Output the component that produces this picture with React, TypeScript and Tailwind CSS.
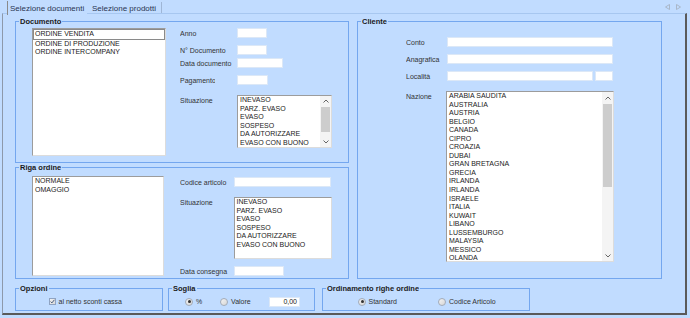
import type { ReactNode } from "react";

const documenti = ["ORDINE VENDITA", "ORDINE DI PRODUZIONE", "ORDINE INTERCOMPANY"];
const situazioni = ["INEVASO", "PARZ. EVASO", "EVASO", "SOSPESO", "DA AUTORIZZARE", "EVASO CON BUONO"];
const nazioni = [
  "ARABIA SAUDITA", "AUSTRALIA", "AUSTRIA", "BELGIO", "CANADA", "CIPRO", "CROAZIA", "DUBAI",
  "GRAN BRETAGNA", "GRECIA", "IRLANDA", "IRLANDA", "ISRAELE", "ITALIA", "KUWAIT", "LIBANO",
  "LUSSEMBURGO", "MALAYSIA", "MESSICO", "OLANDA",
];

function Group({ legend, className, children }: { legend: string; className?: string; children: ReactNode }) {
  return (
    <fieldset className={`border border-[#74a7ef] shrink-0 ${className ?? ""}`}>
      <legend className="ml-[3px] px-[1px] text-[7.5px] leading-[9px] font-bold text-[#1a1a1a]">{legend}</legend>
      {children}
    </fieldset>
  );
}

function Input({ className, value }: { className?: string; value?: string }) {
  return (
    <div className={`h-[10px] bg-white border border-[#dce8f7] text-[7px] leading-[8px] text-right pr-[2px] text-[#222] shrink-0 ${className ?? ""}`}>
      {value}
    </div>
  );
}

function Chevron({ up }: { up?: boolean }) {
  return (
    <svg width="6" height="4" viewBox="0 0 6 4">
      <polyline
        points={up ? "0.5,3.5 3,1 5.5,3.5" : "0.5,0.5 3,3 5.5,0.5"}
        fill="none"
        stroke="#555"
        strokeWidth="0.9"
      />
    </svg>
  );
}

function ListBox({
  items,
  className,
  scroll,
  focusFirst,
}: {
  items: string[];
  className?: string;
  scroll?: { thumbTop: number; thumbHeight: number; arrow: number };
  focusFirst?: boolean;
}) {
  return (
    <div className={`flex bg-white border border-t-[#9c9c9c] border-l-[#9c9c9c] border-r-[#dcdcdc] border-b-[#dcdcdc] overflow-hidden shrink-0 ${className ?? ""}`}>
      <div className="flex-1 min-w-0 flex flex-col">
        {items.map((it, i) => (
          <div
            key={i}
            className={`text-[7px] leading-[8.55px] whitespace-nowrap text-[#222] ${
              focusFirst && i === 0 ? "border border-[#8a8a8a] pl-[1px]" : "pl-[2px]"
            }`}
          >
            {it}
          </div>
        ))}
      </div>
      {scroll && (
        <div className="w-[11px] flex flex-col bg-[#f4f4f4]">
          <div className="flex items-center justify-center" style={{ height: scroll.arrow }}>
            <Chevron up />
          </div>
          <div className="flex-1">
            <div className="bg-[#cdcdcd] mx-[1px]" style={{ marginTop: scroll.thumbTop, height: scroll.thumbHeight }} />
          </div>
          <div className="flex items-center justify-center" style={{ height: scroll.arrow }}>
            <Chevron />
          </div>
        </div>
      )}
    </div>
  );
}

function Label({ children, className }: { children: ReactNode; className?: string }) {
  return (
    <div className={`text-[7px] leading-[9px] text-[#333] whitespace-nowrap overflow-hidden shrink-0 ${className ?? ""}`}>
      {children}
    </div>
  );
}

function Radio({ checked }: { checked?: boolean }) {
  return (
    <div className="w-[8px] h-[8px] rounded-full border border-[#a3abb8] bg-gradient-to-br from-[#f4f4f4] to-[#d6d6d6] flex items-center justify-center shrink-0">
      {checked && <div className="w-[3px] h-[3px] rounded-full bg-[#333]" />}
    </div>
  );
}

export default function App() {
  return (
    <div className="w-[690px] h-[318px] bg-[#c1dcff] font-['Liberation_Sans',Arial,sans-serif] overflow-hidden">
      {/* Tabs */}
      <div className="flex h-[13px]">
        <div className="relative z-10 ml-[7px] mt-[1px] w-[80px] h-[14px] border-l border-[#8a8a8a] bg-[#c1dcff] pl-[2px] pt-[3px] text-[8px] leading-[10px] text-[#2a3552] whitespace-nowrap">
          Selezione documenti
        </div>
        <div className="mt-[2px] w-[75px] h-[11px] border-r border-[#9fb6d6] pl-[5px] pt-[2px] text-[8px] leading-[10px] text-[#2a3552] whitespace-nowrap">
          Selezione prodotti
        </div>
        <div className="ml-auto mr-[9px] mt-[4px] flex gap-[6px]">
          <svg width="5" height="6" viewBox="0 0 5 6">
            <polygon points="4.5,0.5 0.5,3 4.5,5.5" fill="none" stroke="#a3adbb" strokeWidth="0.8" />
          </svg>
          <svg width="5" height="6" viewBox="0 0 5 6">
            <polygon points="0.5,0.5 4.5,3 0.5,5.5" fill="none" stroke="#a3adbb" strokeWidth="0.8" />
          </svg>
        </div>
      </div>

      {/* Panel */}
      <div className="ml-[2px] w-[685px] h-[302px] border-l border-t border-l-[#8d99ab] border-t-[#a7c7f0] border-r-2 border-b-2 border-r-[#5a5a5a] border-b-[#5a5a5a] pl-[12px] pt-[3px]">
        <div className="flex">
          {/* Left column */}
          <div className="w-[334px] flex flex-col">
            <Group legend="Documento" className="h-[146px]">
              <div className="flex pl-[16px]">
                <ListBox items={documenti} focusFirst className="mt-[2px] w-[134px] h-[128px]" />
                <div className="ml-[14px] flex flex-col">
                  <div className="mt-[2px] flex items-center">
                    <Label className="w-[57px]">Anno</Label>
                    <Input className="w-[30px]" />
                  </div>
                  <div className="mt-[7px] flex items-center">
                    <Label className="w-[57px]">N° Documento</Label>
                    <Input className="w-[30px]" />
                  </div>
                  <div className="mt-[3px] flex items-center">
                    <Label className="w-[57px]">Data documento</Label>
                    <Input className="w-[46px]" />
                  </div>
                  <div className="mt-[7px] flex items-center">
                    <Label className="w-[57px]">
                      <span className="inline-block w-[35px] overflow-hidden align-top">Pagamento</span>
                    </Label>
                    <Input className="w-[31px]" />
                  </div>
                  <div className="mt-[10px] flex items-start">
                    <Label className="w-[57px] pt-[1px]">Situazione</Label>
                    <ListBox
                      items={situazioni}
                      className="w-[95px] h-[53px]"
                      scroll={{ thumbTop: 1, thumbHeight: 25, arrow: 10 }}
                    />
                  </div>
                </div>
              </div>
            </Group>

            <Group legend="Riga ordine" className="h-[116px]">
              <div className="flex pl-[16px]">
                <ListBox items={["NORMALE", "OMAGGIO"]} className="mt-[4px] w-[132px] h-[100px]" />
                <div className="ml-[16px] flex flex-col">
                  <div className="mt-[5px] flex items-center">
                    <Label className="w-[53.5px]">Codice articolo</Label>
                    <Input className="w-[97px]" />
                  </div>
                  <div className="mt-[10px] flex items-start">
                    <Label className="w-[53.5px] pt-[1px]">Situazione</Label>
                    <ListBox items={situazioni} className="w-[98px] h-[62px]" />
                  </div>
                  <div className="mt-[7px] flex items-center">
                    <Label className="w-[53.5px]">Data consegna</Label>
                    <Input className="w-[50px]" />
                  </div>
                </div>
              </div>
            </Group>
          </div>

          {/* Cliente */}
          <Group legend="Cliente" className="ml-[8px] w-[305px] h-[262px]">
            <div className="flex flex-col pl-[48px]">
              <div className="mt-[11px] flex items-center">
                <Label className="w-[41px]">Conto</Label>
                <Input className="w-[166px]" />
              </div>
              <div className="mt-[7px] flex items-center">
                <Label className="w-[41px]">Anagrafica</Label>
                <Input className="w-[166px]" />
              </div>
              <div className="mt-[7px] flex items-center">
                <Label className="w-[41px]">Località</Label>
                <Input className="w-[146px]" />
                <Input className="ml-[2px] w-[18px]" />
              </div>
              <div className="mt-[10px] flex items-start">
                <Label className="w-[41px] pt-[1px]">Nazione</Label>
                <ListBox
                  items={nazioni}
                  className="-ml-[1px] w-[168px] h-[171px]"
                  scroll={{ thumbTop: 1, thumbHeight: 83, arrow: 11 }}
                />
              </div>
            </div>
          </Group>
        </div>

        {/* Bottom row */}
        <div className="mt-[5px] flex">
          <Group legend="Opzioni" className="w-[148px] h-[27px]">
            <div className="h-[17px] flex items-center pl-[33px]">
              <div className="w-[7px] h-[7px] border border-[#8fa3c2] bg-gradient-to-br from-[#f2f2f2] to-[#d8d8d8] flex items-center justify-center">
                <svg width="5" height="5" viewBox="0 0 5 5">
                  <polyline points="0.6,2.6 1.9,3.9 4.4,0.8" fill="none" stroke="#3a4e70" strokeWidth="0.9" />
                </svg>
              </div>
              <span className="ml-[2.5px] text-[7px] leading-[9px] text-[#333]">al netto sconti cassa</span>
            </div>
          </Group>

          <Group legend="Soglia" className="ml-[5px] w-[147px] h-[27px]">
            <div className="h-[17px] flex items-center pl-[16px]">
              <div className="w-[35px] flex items-center">
                <Radio checked />
                <span className="ml-[3px] text-[7px] leading-[9px] text-[#333]">%</span>
              </div>
              <div className="w-[49px] flex items-center">
                <Radio />
                <span className="ml-[3px] text-[7px] leading-[9px] text-[#333]">Valore</span>
              </div>
              <Input className="w-[31px]" value="0,00" />
            </div>
          </Group>

          <Group legend="Ordinamento righe ordine" className="ml-[7px] w-[208px] h-[27px]">
            <div className="h-[17px] flex items-center pl-[35px]">
              <div className="w-[80px] flex items-center">
                <Radio checked />
                <span className="ml-[2.5px] text-[7px] leading-[9px] text-[#333]">Standard</span>
              </div>
              <div className="flex items-center">
                <Radio />
                <span className="ml-[3px] text-[7px] leading-[9px] text-[#333]">Codice Articolo</span>
              </div>
            </div>
          </Group>
        </div>
      </div>
    </div>
  );
}
